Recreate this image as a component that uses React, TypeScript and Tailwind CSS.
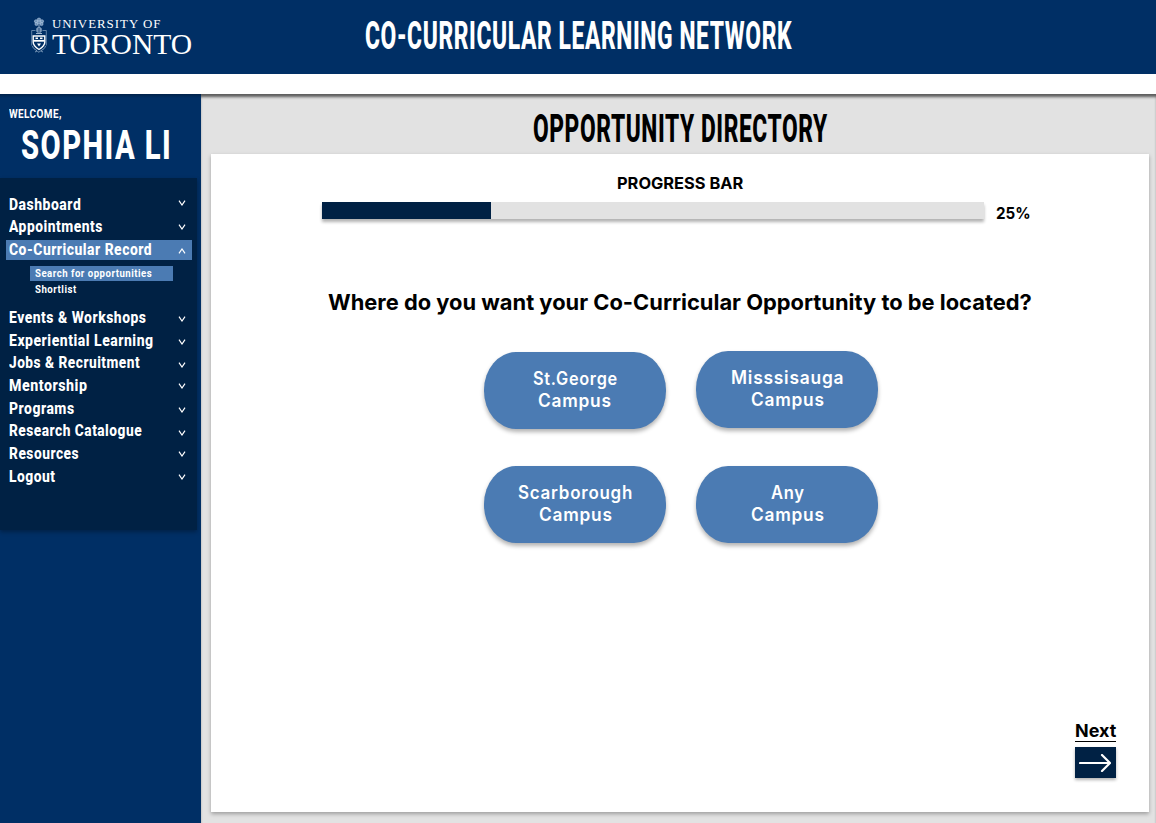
import { useLayoutEffect, useRef, useState } from "react";
import type { ReactNode } from "react";

/** Single line of text squeezed or stretched horizontally to a given width. */
function Fit({ width, className = "", children }: { width: number; className?: string; children: ReactNode }) {
  const ref = useRef<HTMLSpanElement>(null);
  const [scale, setScale] = useState(1);
  useLayoutEffect(() => {
    if (ref.current) setScale(width / ref.current.offsetWidth);
  }, [width]);
  return (
    <span className={`block shrink-0 ${className}`} style={{ width }}>
      <span ref={ref} className="inline-block origin-left whitespace-nowrap align-top" style={{ transform: `scaleX(${scale})` }}>
        {children}
      </span>
    </span>
  );
}

function Chevron({ up = false, className = "" }: { up?: boolean; className?: string }) {
  return (
    <svg viewBox="0 0 8 6" className={`h-1.5 w-2 shrink-0 ${className}`} fill="none" stroke="#fff" strokeWidth="1.2">
      <path d={up ? "M1 5.3 4 1l3 4.3" : "M1 .7 4 5 7 .7"} />
    </svg>
  );
}

function Crest() {
  return (
    <svg viewBox="0 0 16 37" className="h-[37px] w-4" fill="none" stroke="#c3d6ea" strokeWidth="0.8">
      <g fill="#6f92b8" strokeWidth="0.5">
        <circle cx="8" cy="2.800" r="1.800" />
        <circle cx="5" cy="4.300" r="1.600" />
        <circle cx="11" cy="4.300" r="1.600" />
        <circle cx="5.500" cy="7" r="1.600" />
        <circle cx="10.500" cy="7" r="1.600" />
        <circle cx="8" cy="5.500" r="1.700" />
      </g>
      <path d="M8 8v3M6 11h4v4H6ZM5.500 13h5M5 16.500h6" />
      <path d="M.700 13.500h3.800M11.500 13.500h3.800M.700 13.500v15M15.300 13.500v15" strokeWidth="0.5" />
      <path d="M2.200 19h11.600v6c0 3-2.500 5.500-5.800 7.500-3.300-2-5.800-4.500-5.800-7.500Z" stroke="#fff" strokeWidth="1.400" />
      <path d="M2.500 23.800h11" stroke="#fff" strokeWidth="1.800" />
      <path d="M4.500 20.500h2.500v1.500H4.500ZM9 20.500h2.500v1.500H9ZM6 26.500h4l-2 3Z" fill="#fff" stroke="none" />
      <path d="M1.500 29c1 3 2 3 3.500 4s2 2.500 3 2 1.500-1 3-2 2.500-1 3.500-4M4 35l2-1M12 35l-2-1" strokeWidth="0.6" />
    </svg>
  );
}

const topItems = [
  { label: "Dashboard", width: 72, chevron: "mb-[3px]" },
  { label: "Appointments", width: 94, chevron: "mb-px" },
];

const bottomItems = [
  { label: "Events & Workshops", width: 137.5, chevron: "mt-[2px]" },
  { label: "Experiential Learning", width: 144.5, chevron: "mt-[3px]" },
  { label: "Jobs & Recruitment", width: 131, chevron: "mt-[4px]" },
  { label: "Mentorship", width: 78.5, chevron: "mt-0" },
  { label: "Programs", width: 66, chevron: "mt-[3px]" },
  { label: "Research Catalogue", width: 133, chevron: "mt-[4px]" },
  { label: "Resources", width: 70, chevron: "mt-0" },
  { label: "Logout", width: 47, chevron: "mt-px" },
];

function MenuItem({ label, width, chevron }: { label: string; width: number; chevron: string }) {
  return (
    <li className="flex h-[22.65px] items-center justify-between pr-[11.500px] pl-[9px]">
      <Fit width={width}>{label}</Fit>
      <Chevron className={chevron} />
    </li>
  );
}

function Campus({ name, nameWidth, className = "" }: { name: string; nameWidth: number; className?: string }) {
  return (
    <button
      className={`flex h-[77px] w-[182px] flex-col items-center rounded-[32px/38px] bg-[#4b7bb3] pt-4 pl-px font-['Inter'] text-[18px] leading-[21.5px] font-semibold tracking-[0.8px] text-white shadow-[0_3px_4px_rgba(0,0,0,0.3)] ${className}`}
    >
      <Fit width={nameWidth}>{name}</Fit>
      <Fit width={74}>Campus</Fit>
    </button>
  );
}

export default function App() {
  return (
    <div className="flex h-[823px] w-[1156px] flex-col overflow-hidden bg-white font-['Inter',sans-serif] text-black">
      <header className="flex h-[73.500px] shrink-0 bg-[#002f65] text-white">
        <div className="flex w-[365px] pt-[17px] pl-[31px]">
          <Crest />
          <div className="pl-[5px] font-['Liberation_Serif',serif]">
            <Fit width={109} className="text-[13px] leading-[13px] tracking-[1px]">UNIVERSITY OF</Fit>
            <Fit width={140} className="text-[30px] leading-[27px]">TORONTO</Fit>
          </div>
        </div>
        <Fit width={427} className="pt-[13px] font-['Roboto',sans-serif] text-[39.500px] leading-[46px] font-extrabold tracking-[1px]">
          CO-CURRICULAR LEARNING NETWORK
        </Fit>
      </header>

      <div className="mt-[20.500px] flex min-h-0 flex-1">
        <aside className="w-[200.500px] shrink-0 bg-[#002f65] font-['Roboto',sans-serif] font-bold text-white">
          <div className="h-[84px] bg-linear-to-b from-[#00224a] to-[#002f65] to-[4px] pt-3">
            <Fit width={53} className="ml-[9px] text-[12px] leading-4 tracking-[0.5px]">WELCOME,</Fit>
            <Fit width={151} className="ml-[21px] pt-px text-[40px] leading-[46px] font-extrabold tracking-[2px]">SOPHIA LI</Fit>
          </div>
          <nav className="h-[352px] w-[197px] bg-[#002144] pt-[15.500px] text-[16.500px] leading-[22px] font-extrabold tracking-[0.6px] shadow-[0_2px_4px_rgba(0,0,0,0.3)]">
            <ul>
              {topItems.map((item) => (
                <MenuItem key={item.label} {...item} />
              ))}
            </ul>
            <div className="mt-[1.500px] ml-[6px] flex h-5 w-[186px] items-center justify-between bg-[#4b7bb3] pr-[6.500px] pl-[3px]">
              <Fit width={143}>Co-Curricular Record</Fit>
              <Chevron up className="mt-px" />
            </div>
            <div className="mt-[6px] ml-[30px] h-[15px] w-[143px] bg-[#4b7bb3] pl-[5px] text-[11.500px] leading-[15px] font-bold">
              <Fit width={117}>Search for opportunities</Fit>
            </div>
            <Fit width={42} className="ml-[35px] text-[11.500px] leading-[17px] font-bold">Shortlist</Fit>
            <ul className="mt-[8.500px]">
              {bottomItems.map((item) => (
                <MenuItem key={item.label} {...item} />
              ))}
            </ul>
          </nav>
        </aside>

        <main className="flex-1 bg-[#e2e2e2] pl-[10.500px] shadow-[inset_0_4px_3px_-1px_rgba(0,0,0,0.6)]">
          <h1 className="h-[60px] pt-[12px] pl-[322px]">
            <Fit width={295} className="font-['Roboto',sans-serif] text-[39.500px] leading-[46px] font-extrabold tracking-[1px]">
              OPPORTUNITY DIRECTORY
            </Fit>
          </h1>
          <section className="flex h-[658px] w-[938px] flex-col bg-white shadow-[0_2px_4px_rgba(0,0,0,0.3)]">
            <Fit width={126} className="mt-[18.500px] ml-[406px] text-[16px] leading-5 font-bold">PROGRESS BAR</Fit>
            <div className="mt-[9.500px] ml-[111px] flex h-[23px]">
              <div className="h-[17px] w-[662px] bg-[#e2e2e2] shadow-[0_3px_3px_rgba(0,0,0,0.3)]">
                <div className="h-full w-[169px] bg-[#002144]" />
              </div>
              <Fit width={35} className="mt-px ml-3 text-[16px] leading-[21px] font-bold">25%</Fit>
            </div>
            <Fit width={704} className="mt-[63px] ml-[117px] text-[22px] leading-7 font-bold">
              Where do you want your Co-Curricular Opportunity to be located?
            </Fit>
            <div className="mt-[35px] ml-[272.500px] flex gap-[30.500px]">
              <Campus name="St.George" nameWidth={85} className="mt-px" />
              <Campus name="Misssisauga" nameWidth={113} />
            </div>
            <div className="mt-[37px] ml-[273px] flex gap-[30px]">
              <Campus name="Scarborough" nameWidth={115} />
              <Campus name="Any" nameWidth={34} />
            </div>
            <div className="mt-[177px] ml-[863.500px] w-[41px]">
              <div className="h-[22px] border-b-[1.500px] border-black">
                <Fit width={41} className="text-[17.500px] leading-[21px] font-bold">Next</Fit>
              </div>
              <button className="mt-[5px] flex h-[31px] w-[41px] items-center justify-center bg-[#002144] shadow-[0_2px_3px_rgba(0,0,0,0.3)]">
                <svg viewBox="0 0 32 18" className="h-[18px] w-8" fill="none" stroke="#fff" strokeWidth="2.200" strokeLinecap="round" strokeLinejoin="round">
                  <path d="M1 9h30M23 1l8 8-8 8" />
                </svg>
              </button>
            </div>
          </section>
        </main>
      </div>
    </div>
  );
}
